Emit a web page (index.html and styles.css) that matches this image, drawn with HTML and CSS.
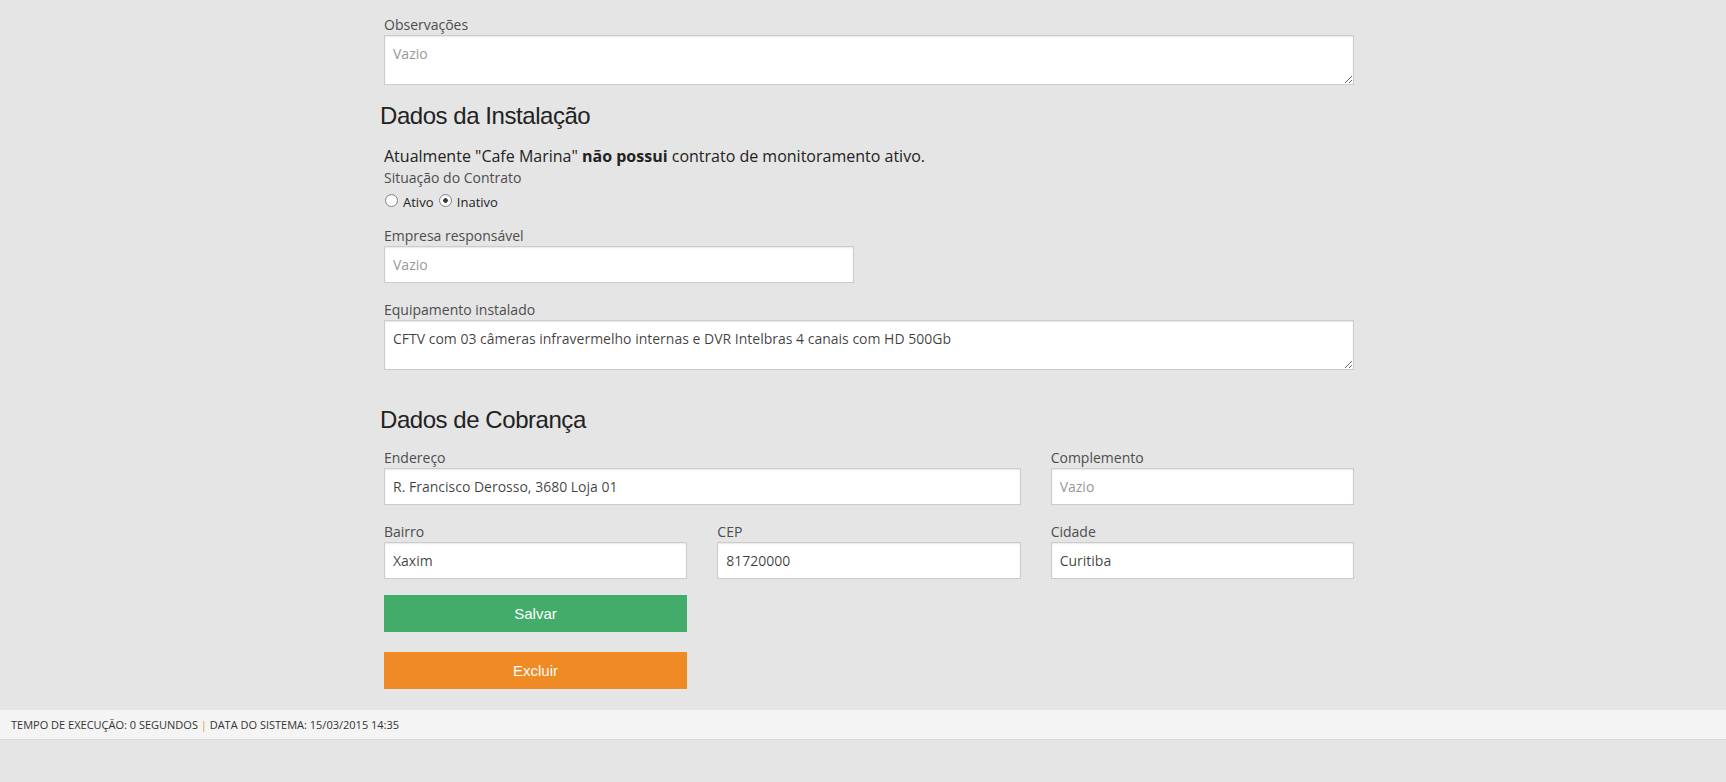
FILE: index.html
```html
<!DOCTYPE html>
<html lang="pt-BR">
<head>
<meta charset="utf-8">
<title>Cadastro</title>
<link rel="stylesheet" href="styles.css">
</head>
<body>
<div class="page">
  <main class="content">
    <div class="field field-first">
      <label class="lbl">Observações</label>
      <textarea class="txt area" placeholder="Vazio"></textarea>
    </div>

    <h2 class="section-title first">Dados da Instalação</h2>
    <p class="notice">Atualmente "Cafe Marina" <b>não possui</b> contrato de monitoramento ativo.</p>
    <label class="lbl">Situação do Contrato</label>
    <div class="radios">
      <label class="radio"><input type="radio" name="sit">Ativo</label>
      <label class="radio"><input type="radio" name="sit" checked>Inativo</label>
    </div>
    <div class="field half">
      <label class="lbl">Empresa responsável</label>
      <input class="txt" type="text" placeholder="Vazio">
    </div>
    <div class="field">
      <label class="lbl">Equipamento instalado</label>
      <textarea class="txt area">CFTV com 03 câmeras infravermelho internas e DVR Intelbras 4 canais com HD 500Gb</textarea>
    </div>

    <h2 class="section-title second">Dados de Cobrança</h2>
    <div class="grid">
      <div class="field span2">
        <label class="lbl">Endereço</label>
        <input class="txt" type="text" value="R. Francisco Derosso, 3680 Loja 01">
      </div>
      <div class="field">
        <label class="lbl">Complemento</label>
        <input class="txt" type="text" placeholder="Vazio">
      </div>
      <div class="field">
        <label class="lbl">Bairro</label>
        <input class="txt" type="text" value="Xaxim">
      </div>
      <div class="field">
        <label class="lbl">CEP</label>
        <input class="txt" type="text" value="81720000">
      </div>
      <div class="field">
        <label class="lbl">Cidade</label>
        <input class="txt" type="text" value="Curitiba">
      </div>
    </div>
    <div class="actions">
      <button class="btn save" type="button">Salvar</button>
      <button class="btn delete" type="button">Excluir</button>
    </div>
  </main>
  <footer class="footer">TEMPO DE EXECUÇÃO: 0 SEGUNDOS <span class="sep">|</span> DATA DO SISTEMA: 15/03/2015 14:35</footer>
</div>
</body>
</html>
```
FILE: styles.css
```css
html, body {
  margin: 0;
  padding: 0;
}
body {
  background: #e5e5e5;
  font-family: "Open Sans", "Liberation Sans", sans-serif;
  color: #222;
}
.page {
  display: flex;
  flex-direction: column;
  min-height: 100vh;
}
.content {
  width: 970px;
  margin-left: calc(50% - 479px);
  padding-top: 15px;
  display: flex;
  flex-direction: column;
}
.lbl {
  display: block;
  font-size: 14px;
  line-height: 20px;
  color: #4d4d4d;
}
.field {
  display: flex;
  flex-direction: column;
  margin-bottom: 17px;
}
.field-first {
  margin-bottom: 0;
}
.half {
  width: 470px;
}
.txt {
  box-sizing: border-box;
  width: 100%;
  height: 37px;
  margin: 0;
  padding: 0 8px;
  border: 1px solid #cccccc;
  background: #ffffff;
  box-shadow: inset 0 1px 2px rgba(0, 0, 0, 0.1);
  font-family: "Open Sans", "Liberation Sans", sans-serif;
  font-size: 14px;
  color: rgba(0, 0, 0, 0.75);
  border-radius: 0;
  outline: none;
}
.txt::placeholder {
  color: #999999;
}
.area {
  height: 50px;
  padding: 8px;
  line-height: 20px;
  resize: vertical;
  display: block;
}
.section-title {
  font-family: "Liberation Sans", Arial, sans-serif;
  font-weight: normal;
  font-size: 24px;
  line-height: 26px;
  letter-spacing: -0.45px;
  color: #222222;
  margin: 0 0 0 -4px;
}
.section-title.first {
  margin-top: 18px;
  margin-bottom: 16px;
}
.section-title.second {
  margin-top: 20px;
  margin-bottom: 15px;
}
.notice {
  margin: 0;
  font-size: 16px;
  line-height: 23px;
  color: #222;
}
.radios {
  display: block;
  height: 24px;
  line-height: 24px;
  padding-top: 2px;
  margin-bottom: 12px;
  font-size: 13px;
  color: #222;
}
.radio {
  display: inline-block;
  margin-right: 1px;
}
.radio input {
  -webkit-appearance: none;
  appearance: none;
  box-sizing: border-box;
  width: 13px;
  height: 13px;
  margin: 0 5px 0 1px;
  vertical-align: 0;
  border: 1px solid #858585;
  border-radius: 50%;
  background: #ffffff;
  box-shadow: inset 0 1px 1px rgba(0, 0, 0, 0.08);
}
.radio input:checked {
  background: radial-gradient(circle, #3a3a3a 0 2px, #ffffff 2.6px);
}
.grid {
  display: grid;
  grid-template-columns: repeat(3, 1fr);
  column-gap: 30px;
}
.span2 {
  grid-column: span 2;
}
.actions {
  display: flex;
  flex-direction: column;
  align-items: flex-start;
  gap: 20px;
  margin-top: -1px;
}
.btn {
  width: 303px;
  height: 37px;
  border: 0;
  margin: 0;
  padding: 0;
  color: #ffffff;
  font-family: "Liberation Sans", Arial, sans-serif;
  font-size: 15px;
  cursor: pointer;
}
.save {
  background: #43ac6a;
}
.delete {
  background: #f08a24;
}
.footer {
  margin-top: 21px;
  height: 29px;
  line-height: 29px;
  background: #f4f4f4;
  border-bottom: 1px solid #d9d9d9;
  padding-left: 11px;
  font-size: 11px;
  color: #333333;
}
.sep {
  color: #e39a3c;
}
```
